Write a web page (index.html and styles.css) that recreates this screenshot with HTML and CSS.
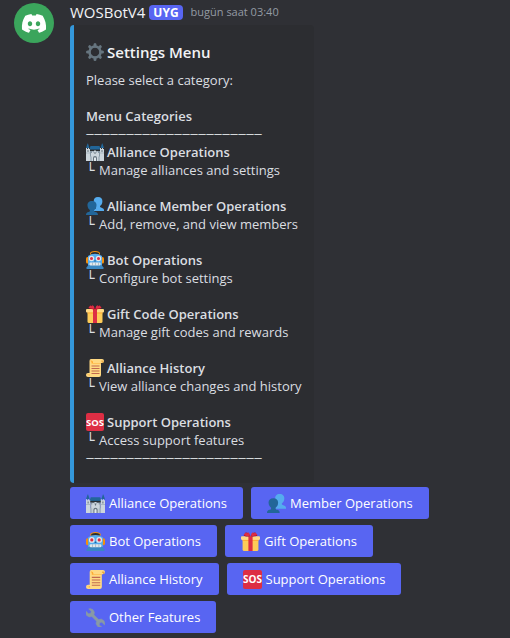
FILE: index.html
```html
<!DOCTYPE html>
<html lang="en">
<head>
<meta charset="utf-8">
<meta name="viewport" content="width=device-width, initial-scale=1">
<title>Settings Menu</title>
<link rel="stylesheet" href="styles.css">
</head>
<body>
<svg class="sprite" aria-hidden="true">
  <symbol id="gear" viewBox="0 0 36 36">
    <g fill="none" stroke="#66757f">
      <circle cx="18" cy="18" r="11" stroke-width="5"/>
      <path stroke-width="6" stroke-linecap="round" d="M18 3v3M18 30v3M3 18h3M30 18h3M7.400 7.400l2 2M26.600 26.600l2 2M28.600 7.400l-2 2M9.400 26.600l-2 2"/>
    </g>
  </symbol>
  <symbol id="castle" viewBox="0 0 36 36">
    <path fill="#8899a6" d="M8 14h20v22H8z"/>
    <path fill="#226699" d="M9 6h18l3 9H6zM0 10l3-9h1l3 9zM29 10l3-9h1l3 9z"/>
    <path fill="#292f33" d="M7 13h22v3H7z"/>
    <path fill="#ccd6dd" d="M0 10h2v2h2v-2h2v2h2v24H0zM28 10h2v2h2v-2h2v2h2v24h-8zM10 20h2v-3h3v3h1v-5h4v5h1v-3h3v3h2v16H10z"/>
    <path fill="#aab8c2" d="M0 19h8v2H0zM28 19h8v2h-8zM8 27h4v9H8zM24 27h4v9h-4z"/>
    <path fill="#66757f" d="M3 14h2v4H3zM31 14h2v4h-2zM17 18h2v4h-2zM14 36v-6q0-4 4-4t4 4v6z"/>
    <path fill="#e1e8ed" d="M16 36v-6q2-3 4 0v6z"/>
  </symbol>
  <symbol id="people" viewBox="0 0 36 36">
    <path fill="#55acee" d="M24 0c-6 0-9 4-8.500 9 .3 4 2 7 4.500 9v3c0 2-2 3-4 4v3h20v-2c0-3-3-4-6-5-2-.6-2-2-2-3 3-2 4.500-5 4.800-9C33.300 4 30 0 24 0z"/>
    <path fill="#226699" d="M12 8C6 8 2.500 12 3 17c.3 4 2 7 4.800 9 0 3-.4 3.500-2.800 4-3 .7-5 2-5 6h24c0-4-2-5.300-5-6-2.300-.5-2.800-1-2.800-4 2.800-2 4.500-5 4.800-9 .5-5-3-9-9-9z"/>
  </symbol>
  <symbol id="robot" viewBox="0 0 36 36">
    <ellipse cx="18" cy="5" rx="10" ry="5" fill="#f4900c"/>
    <path fill="#292f33" d="M10 4q8-4 16 0v3H10z"/>
    <rect y="12" width="8" height="13" rx="3" fill="#f4900c"/>
    <rect x="28" y="12" width="8" height="13" rx="3" fill="#f4900c"/>
    <path fill="#55acee" d="M4 10q14-9 28 0v20H4z"/>
    <path fill="#3b88c3" d="M5 28h26l4 5v3H1v-3z"/>
    <circle cx="11" cy="15" r="5.500" fill="#e1e8ed"/>
    <circle cx="25" cy="15" r="5.500" fill="#e1e8ed"/>
    <circle cx="11" cy="15" r="3" fill="#dd2e44"/>
    <circle cx="25" cy="15" r="3" fill="#dd2e44"/>
    <path fill="#226699" d="M18 17l2 4h-4z"/>
    <rect x="7" y="23" width="22" height="6" rx="2" fill="#e1e8ed"/>
    <path fill="#8899a6" d="M12 23h1v6h-1zM18 23h1v6h-1zM24 23h1v6h-1z"/>
  </symbol>
  <symbol id="gift" viewBox="0 0 36 36">
    <path fill="#fdcb58" d="M3 13h30v20q0 3-3 3H6q-3 0-3-3z"/>
    <path fill="#ffd983" d="M2 8h32q2 0 2 2v3q0 2-2 2H2q-2 0-2-2v-3q0-2 2-2z"/>
    <path fill="#ffac33" d="M3 15h30v2H3z"/>
    <path fill="#dd2e44" d="M14 8h8v28h-8z"/>
    <path fill="#a0041e" d="M17 8C12 9 6 8 5 6l4-5c3 0 7 3 9 7 2-4 6-7 9-7l4 5c-1 2-7 3-12 2z"/>
    <path fill="#dd2e44" d="M17 7C12 8 7 7 5 5l4-4 3 2 1-3q4 2 4 7zM19 7c5 1 10 0 12-2l-4-4-3 2-1-3q-4 2-4 7z"/>
  </symbol>
  <symbol id="scroll" viewBox="0 0 36 36">
    <path fill="#ffd983" d="M10 0h22q4 0 4 4t-4 4h-2v24q0 4-4 4H4q-4 0-4-4t4-4h3V4q0-4 3-4z"/>
    <path fill="#ffac33" d="M10 3q4 0 4 3v2h16v1H11V6q0-2-3-2zM4 30q4 0 4 3H4q2 0 2-2H2q0-1 2-1z"/>
    <path fill="#e39f3d" d="M32 3q-2 0-2 2h3q0 3-3 3 6 1 5-4-1-1-3-1z"/>
    <path fill="#c1694f" d="M11 13h16v2H11zM11 18h16v2H11zM11 23h16v2H11zM11 28h16v2H11z"/>
  </symbol>
  <symbol id="wrench" viewBox="0 0 36 36">
    <path fill="#8899a6" d="M8 1l5 2 3 5-1 5 9 9 5-1 5 3 2 5-1 3-5-5-4 1-1 4 5 4-3 1-5-2-3-5 1-5-9-9-5 1-5-3-2-5 1-3 5 5 4-1 1-4-5-4z" stroke="#8899a6" stroke-linejoin="round"/>
  </symbol>
</svg>

<main class="message">
  <svg class="avatar" viewBox="0 0 40 40" role="img" aria-label="WOSBotV4 avatar">
    <circle cx="20" cy="20" r="20" fill="#3ba55c"/>
    <path fill="#fff" fill-rule="evenodd" d="M17.400 11c-2.300.3-4.300 1-6.100 1.800C8.600 17 7.500 21.500 8 26.500c2.200 1.600 4.500 2.500 7 3.200l1.500-2.600-2.200-1.100.5-.4c3.400 1.500 7 1.500 10.400 0l.5.4-2.200 1.100 1.500 2.600c2.500-.7 4.800-1.600 7-3.200.5-5-.8-9.700-3.300-13.700-1.800-.8-3.800-1.500-6.100-1.800l-.8 1.600c-1.200-.2-2.400-.2-3.600 0zM16 18.300c1.300 0 2.200 1.100 2.200 2.500S17.300 23.200 16 23.200s-2.200-1.100-2.200-2.400.9-2.500 2.200-2.500zm8 0c1.300 0 2.200 1.100 2.200 2.500s-.9 2.400-2.200 2.400-2.200-1.100-2.200-2.400.9-2.500 2.200-2.500z"/>
  </svg>
  <div class="content">
    <header class="meta">
      <span class="name">WOSBotV4</span>
      <span class="tag">UYG</span>
      <time class="time" lang="tr">bugün saat 03:40</time>
    </header>
    <article class="embed">
      <h1 class="title"><svg class="emoji"><use href="#gear"/></svg>Settings Menu</h1>
      <p>Please select a category:</p>
      <h2 class="subtitle">Menu Categories</h2>
      <p class="rule">——————————————————————</p>
      <ul class="categories">
        <li><strong><svg class="emoji"><use href="#castle"/></svg>Alliance Operations</strong><p><span class="branch">└</span>Manage alliances and settings</p></li>
        <li><strong><svg class="emoji"><use href="#people"/></svg>Alliance Member Operations</strong><p><span class="branch">└</span>Add, remove, and view members</p></li>
        <li><strong><svg class="emoji"><use href="#robot"/></svg>Bot Operations</strong><p><span class="branch">└</span>Configure bot settings</p></li>
        <li><strong><svg class="emoji"><use href="#gift"/></svg>Gift Code Operations</strong><p><span class="branch">└</span>Manage gift codes and rewards</p></li>
        <li><strong><svg class="emoji"><use href="#scroll"/></svg>Alliance History</strong><p><span class="branch">└</span>View alliance changes and history</p></li>
        <li><strong><svg class="emoji" viewBox="0 0 36 36"><rect width="36" height="36" rx="4" fill="#dd2e44"/><text class="sos-text" x="18" y="25" text-anchor="middle">SOS</text></svg>Support Operations</strong><p><span class="branch">└</span>Access support features</p></li>
      </ul>
      <p class="rule">——————————————————————</p>
    </article>
    <div class="actions">
      <div class="row">
        <button type="button"><svg class="icon"><use href="#castle"/></svg>Alliance Operations</button>
        <button type="button"><svg class="icon"><use href="#people"/></svg>Member Operations</button>
      </div>
      <div class="row">
        <button type="button"><svg class="icon"><use href="#robot"/></svg>Bot Operations</button>
        <button type="button"><svg class="icon"><use href="#gift"/></svg>Gift Operations</button>
      </div>
      <div class="row">
        <button type="button"><svg class="icon"><use href="#scroll"/></svg>Alliance History</button>
        <button type="button"><svg class="icon" viewBox="0 0 36 36"><rect width="36" height="36" rx="4" fill="#dd2e44"/><text class="sos-text" x="18" y="25" text-anchor="middle">SOS</text></svg>Support Operations</button>
      </div>
      <div class="row">
        <button type="button"><svg class="icon"><use href="#wrench"/></svg>Other Features</button>
      </div>
    </div>
  </div>
</main>
</body>
</html>
```
FILE: styles.css
```css
* {
  box-sizing: border-box;
}

body {
  margin: 0;
  background: #2f3035;
  color: #dbdee1;
  font: 13px/18px "Open Sans", "Noto Sans", sans-serif;
}

h1, h2, p, ul {
  margin: 0;
  padding: 0;
}

.sprite {
  position: absolute;
  width: 0;
  height: 0;
}

.sos-text {
  fill: #fff;
  font: bold 19px "Open Sans", "Noto Sans", sans-serif;
}

.message {
  display: flex;
  gap: 16px;
  padding: 1px 14px 4px;
}

.avatar {
  flex: none;
  width: 40px;
  height: 40px;
  margin-top: 2px;
}

.content {
  flex: 1;
  min-width: 0;
}

.meta {
  display: flex;
  align-items: center;
  height: 22px;
  margin-bottom: 2px;
}

.name {
  color: #f2f3f5;
  font-size: 15px;
  font-weight: 500;
}

.tag {
  margin: 0 8px 0 4px;
  padding: 0 4px;
  border-radius: 4px;
  background: #5865f2;
  color: #fff;
  font-size: 12px;
  font-weight: 700;
  line-height: 15px;
}

.time {
  color: #949ba4;
  font-size: 11px;
}

.embed {
  width: fit-content;
  padding: 16px 12px;
  border-left: 4px solid #3498db;
  border-radius: 4px;
  background: #2c2d31;
}

.title {
  display: flex;
  align-items: center;
  gap: 3px;
  margin-bottom: 8px;
  color: #f2f3f5;
  font-size: 15px;
  font-weight: 600;
  line-height: 22px;
}

.subtitle {
  margin-top: 18px;
  font-size: 13px;
  font-weight: 600;
}

.rule {
  font-family: "Noto Sans", sans-serif;
  font-size: 8px;
  font-weight: 600;
}

.categories {
  display: grid;
  gap: 18px;
  list-style: none;
}

.categories strong {
  display: flex;
  align-items: center;
  gap: 3px;
  font-weight: 600;
}

.categories p {
  display: flex;
}

.branch {
  width: 13px;
  font-family: "DejaVu Sans Mono", monospace;
  font-size: 14px;
}

.emoji {
  flex: none;
  width: 18px;
  height: 18px;
}

.actions {
  display: grid;
  gap: 6px;
  margin-top: 4px;
}

.row {
  display: flex;
  flex-wrap: wrap;
  gap: 8px;
}

button {
  display: flex;
  align-items: center;
  gap: 4px;
  height: 32px;
  padding: 0 16px;
  border: 0;
  border-radius: 3px;
  background: #5865f2;
  color: #fff;
  font: 500 13px/18px "Open Sans", "Noto Sans", sans-serif;
}

.icon {
  flex: none;
  width: 19px;
  height: 19px;
}
```
